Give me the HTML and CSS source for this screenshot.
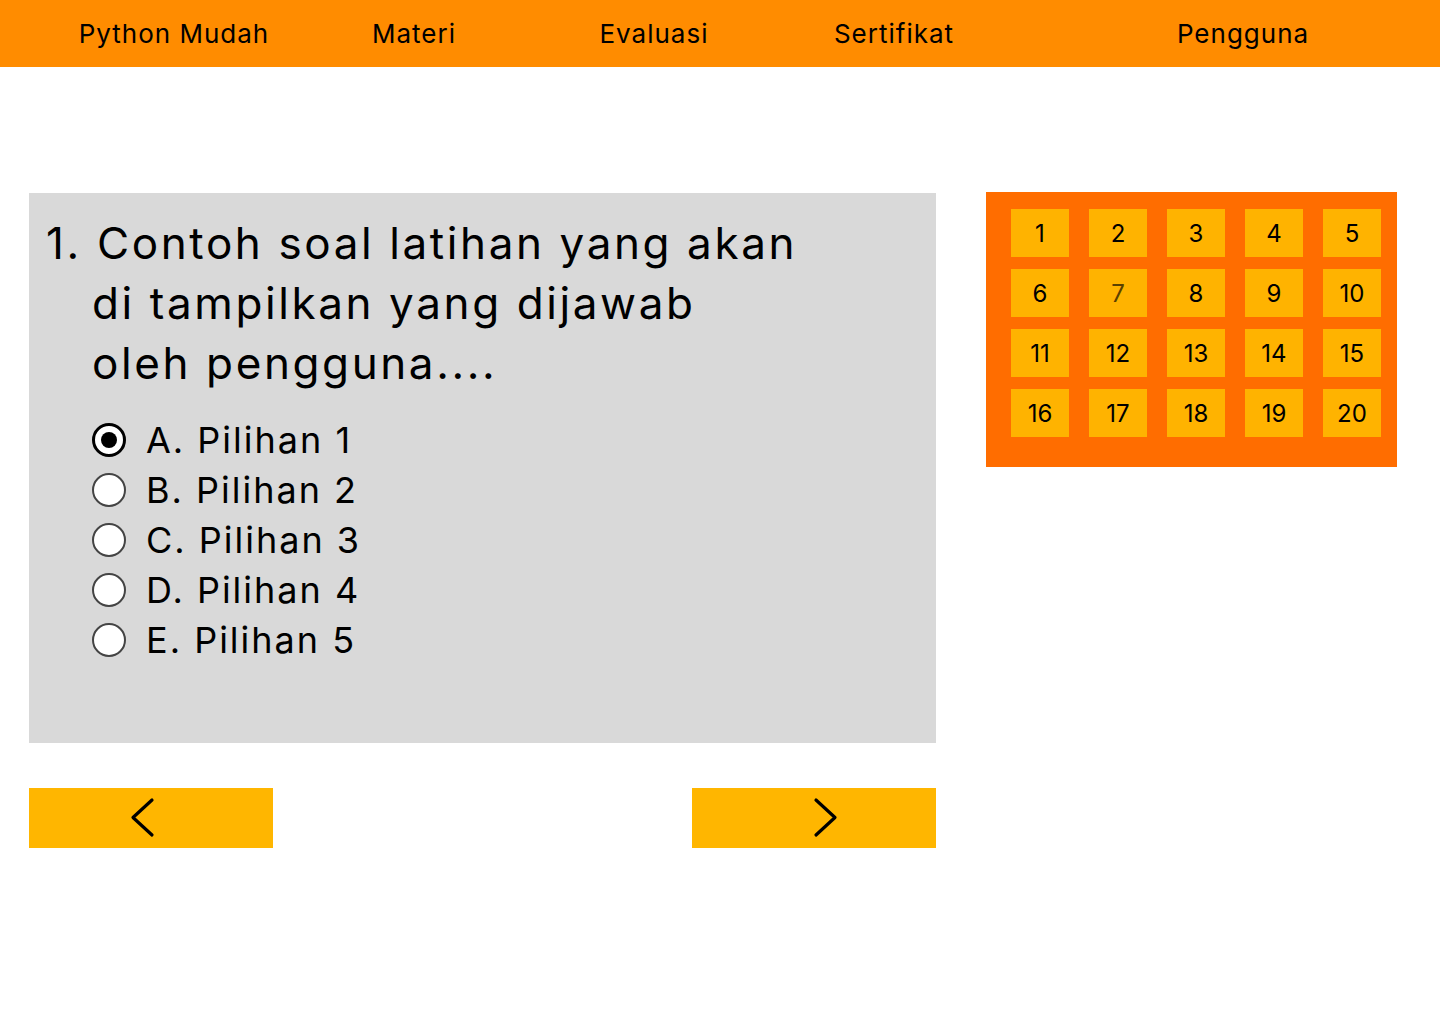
FILE: index.html
```html
<!DOCTYPE html>
<html lang="id">
<head>
<meta charset="utf-8">
<title>Python Mudah - Evaluasi</title>
<link rel="stylesheet" href="styles.css">
</head>
<body>
<header class="nav">
  <a class="nav-item">Python Mudah</a>
  <a class="nav-item">Materi</a>
  <a class="nav-item">Evaluasi</a>
  <a class="nav-item">Sertifikat</a>
  <a class="nav-item nav-user">Pengguna</a>
</header>
<main class="main">
  <section class="left">
    <div class="question">
      <div class="q-text">
        <span class="q-num">1.</span>
        <span class="q-body">Contoh soal latihan yang akan<br>di tampilkan yang dijawab<br>oleh pengguna....</span>
      </div>
      <ul class="options">
        <li class="option"><span class="radio checked"></span><span>A. Pilihan 1</span></li>
        <li class="option"><span class="radio"></span><span>B. Pilihan 2</span></li>
        <li class="option"><span class="radio"></span><span>C. Pilihan 3</span></li>
        <li class="option"><span class="radio"></span><span>D. Pilihan 4</span></li>
        <li class="option"><span class="radio"></span><span>E. Pilihan 5</span></li>
      </ul>
    </div>
    <div class="nav-buttons">
      <button class="btn btn-prev" aria-label="Sebelumnya">
        <svg width="26" height="42" viewBox="0 0 26 42"><path d="M23 3 L4 20.5 L23 38" fill="none" stroke="#000" stroke-width="3.2" stroke-linecap="round" stroke-linejoin="round"/></svg>
      </button>
      <button class="btn btn-next" aria-label="Berikutnya">
        <svg width="26" height="42" viewBox="0 0 26 42"><path d="M3 3 L22 20.5 L3 38" fill="none" stroke="#000" stroke-width="3.2" stroke-linecap="round" stroke-linejoin="round"/></svg>
      </button>
    </div>
  </section>
  <aside class="right">
    <div class="grid">
      <div class="cell">1</div><div class="cell">2</div><div class="cell">3</div><div class="cell">4</div><div class="cell">5</div>
      <div class="cell">6</div><div class="cell dim">7</div><div class="cell">8</div><div class="cell">9</div><div class="cell">10</div>
      <div class="cell">11</div><div class="cell">12</div><div class="cell">13</div><div class="cell">14</div><div class="cell">15</div>
      <div class="cell">16</div><div class="cell">17</div><div class="cell">18</div><div class="cell">19</div><div class="cell">20</div>
    </div>
  </aside>
</main>
</body>
</html>
```
FILE: styles.css
```css
* { box-sizing: border-box; }
body {
  margin: 0;
  background: #fff;
  font-family: "Inter", "Lato", sans-serif;
  color: #000;
}
.nav {
  height: 67px;
  background: #FF8C00;
  display: flex;
  align-items: center;
  padding: 0 77px 0 54px;
}
.nav-item {
  width: 240px;
  text-align: center;
  font-size: 26px;
  font-weight: 400;
  letter-spacing: 1px;
}
.nav-user { margin-left: auto; }
.main {
  display: flex;
  padding: 125px 43px 0 29px;
  gap: 50px;
}
.left { width: 907px; }
.question {
  margin-top: 1px;
  height: 550px;
  background: #D9D9D9;
  padding: 20px 0 0 17px;
}
.q-text {
  display: flex;
  font-size: 44px;
  line-height: 60px;
  letter-spacing: 2.6px;
}
.q-num { width: 46px; flex: none; }
.q-body { text-indent: 5px; }
.options {
  list-style: none;
  margin: 22px 0 0 46px;
  padding: 0;
}
.option {
  display: flex;
  align-items: center;
  height: 50px;
  font-size: 36px;
  letter-spacing: 2px;
}
.radio {
  width: 34px;
  height: 34px;
  border-radius: 50%;
  background: #fff;
  border: 2px solid #444;
  margin-right: 20px;
  flex: none;
  display: flex;
  align-items: center;
  justify-content: center;
}
.radio.checked { border: 3px solid #000; }
.radio.checked::after {
  content: "";
  width: 16px;
  height: 16px;
  border-radius: 50%;
  background: #000;
}
.nav-buttons {
  display: flex;
  justify-content: space-between;
  margin-top: 45px;
}
.btn {
  width: 244px;
  height: 60px;
  border: none;
  background: #FFB600;
  display: flex;
  align-items: center;
  padding: 0;
}
.btn-prev { padding-left: 100px; }
.btn-next { padding-left: 121px; }
.right { width: 411px; }
.grid {
  background: #FF6D00;
  padding: 17px 16px 30px 25px;
  display: grid;
  grid-template-columns: repeat(5, 58px);
  grid-auto-rows: 48px;
  column-gap: 20px;
  row-gap: 12px;
}
.cell {
  background: #FFB300;
  display: flex;
  align-items: center;
  justify-content: center;
  font-size: 24px;
  font-weight: 400;
}
.cell.dim { color: #5a4100; }
```
